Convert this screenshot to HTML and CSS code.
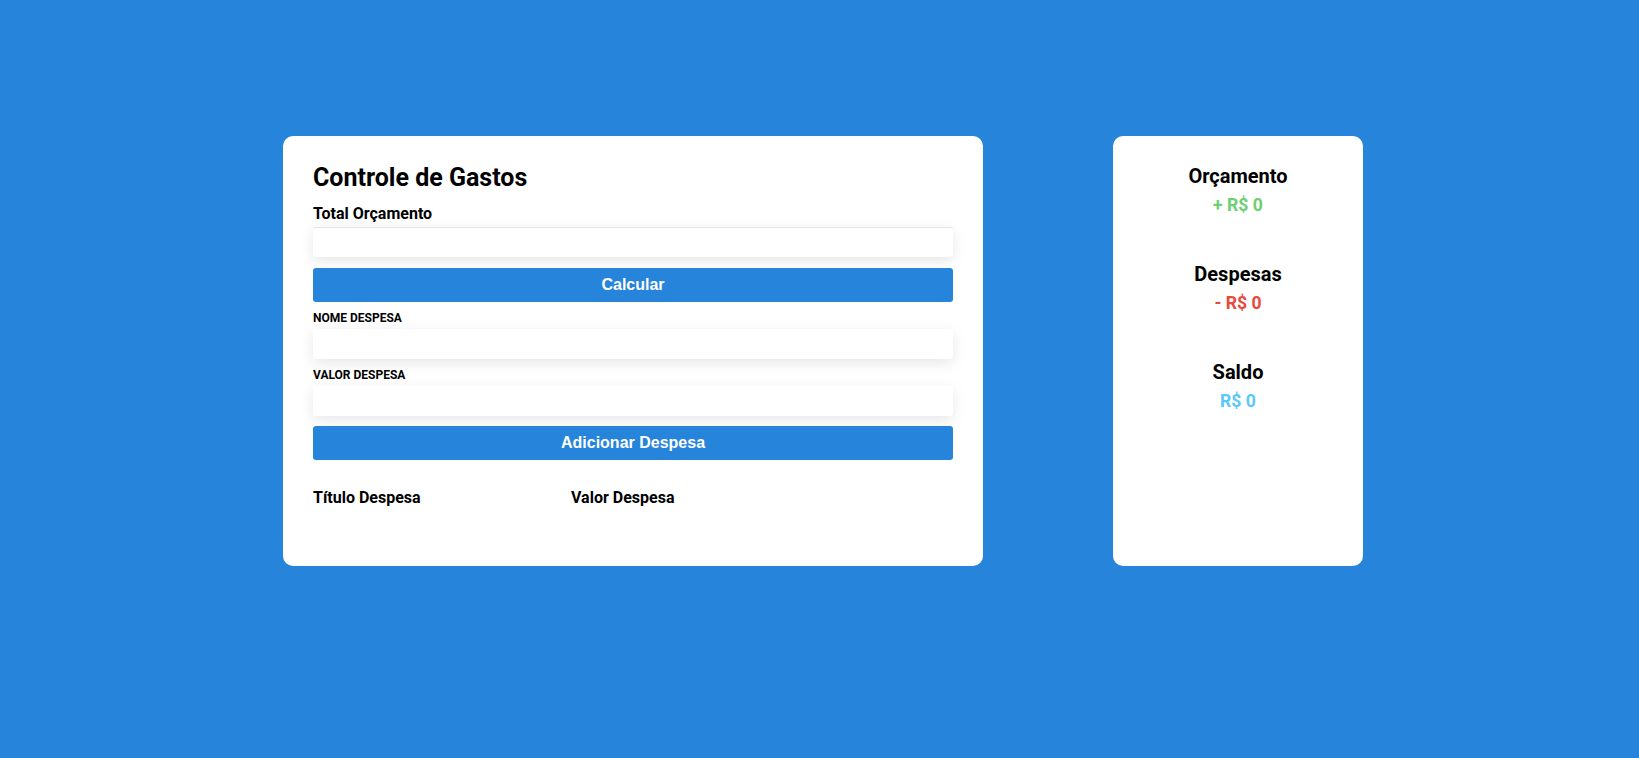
FILE: index.html
```html
<!DOCTYPE html>
<html lang="pt-BR">
<head>
<meta charset="utf-8">
<title>Controle de Gastos</title>
<link rel="stylesheet" href="styles.css">
</head>
<body>
<main class="page">
  <section class="card form-card">
    <h1 class="title">Controle de Gastos</h1>
    <label class="label-lg" for="orcamento">Total Orçamento</label>
    <input class="field field-top" id="orcamento" type="text">
    <button class="btn">Calcular</button>
    <label class="label-sm" for="nome">NOME DESPESA</label>
    <input class="field" id="nome" type="text">
    <label class="label-sm" for="valor">VALOR DESPESA</label>
    <input class="field" id="valor" type="text">
    <button class="btn">Adicionar Despesa</button>
    <div class="table-head">
      <span>Título Despesa</span>
      <span>Valor Despesa</span>
    </div>
  </section>
  <aside class="card summary-card">
    <div class="summary-item">
      <h3 class="summary-title">Orçamento</h3>
      <p class="summary-value green">+ R$ 0</p>
    </div>
    <div class="summary-item">
      <h3 class="summary-title">Despesas</h3>
      <p class="summary-value red">- R$ 0</p>
    </div>
    <div class="summary-item">
      <h3 class="summary-title">Saldo</h3>
      <p class="summary-value blue">R$ 0</p>
    </div>
  </aside>
</main>
</body>
</html>
```

FILE: styles.css
```css
* { box-sizing: border-box; }
html, body {
  margin: 0;
  height: 100%;
}
body {
  background: #2684da;
  font-family: Roboto, "Liberation Sans", Arial, sans-serif;
  color: #000;
}
.page {
  display: flex;
  justify-content: center;
  align-items: flex-start;
  gap: 130px;
  padding: 136px 0 0 7px;
}
.card {
  background: #fff;
  border-radius: 10px;
  height: 430px;
}
.form-card {
  width: 700px;
  padding: 28px 30px;
  display: flex;
  flex-direction: column;
}
.title {
  margin: 0;
  font-size: 25px;
  line-height: 28px;
  font-weight: 700;
}
.label-lg {
  margin-top: 12px;
  font-size: 16px;
  line-height: 19px;
  font-weight: 700;
}
.label-sm {
  margin-top: 9px;
  font-size: 12px;
  line-height: 14px;
  font-weight: 700;
}
.field {
  margin-top: 4px;
  height: 30px;
  width: 100%;
  border: none;
  border-radius: 3px;
  background: #fff;
  box-shadow: 0 4px 14px rgba(0, 0, 0, 0.1);
  outline: none;
  font-family: inherit;
}
.field-top {
  border-top: 1px solid #e3e3e3;
}
.btn {
  margin-top: 10px;
  height: 34px;
  width: 100%;
  border: none;
  border-radius: 3px;
  background: #2684da;
  color: #fff;
  font-family: "Liberation Sans", Arial, sans-serif;
  font-size: 16px;
  font-weight: 700;
  cursor: pointer;
}
.form-card > .btn:first-of-type { margin-top: 11px; }
.table-head {
  margin-top: 28px;
  display: grid;
  grid-template-columns: 258px 1fr;
  font-size: 16px;
  line-height: 19px;
  font-weight: 700;
}
.summary-card {
  width: 250px;
  padding: 29px 20px;
  text-align: center;
  display: flex;
  flex-direction: column;
  gap: 48px;
}
.summary-title {
  margin: 0;
  font-size: 20px;
  line-height: 22px;
  font-weight: 700;
}
.summary-value {
  margin: 8px 0 0;
  font-size: 17.6px;
  line-height: 20px;
  font-weight: 700;
}
.green { color: #6dcf72; }
.red { color: #e8493c; }
.blue { color: #5ac8fa; }
```
